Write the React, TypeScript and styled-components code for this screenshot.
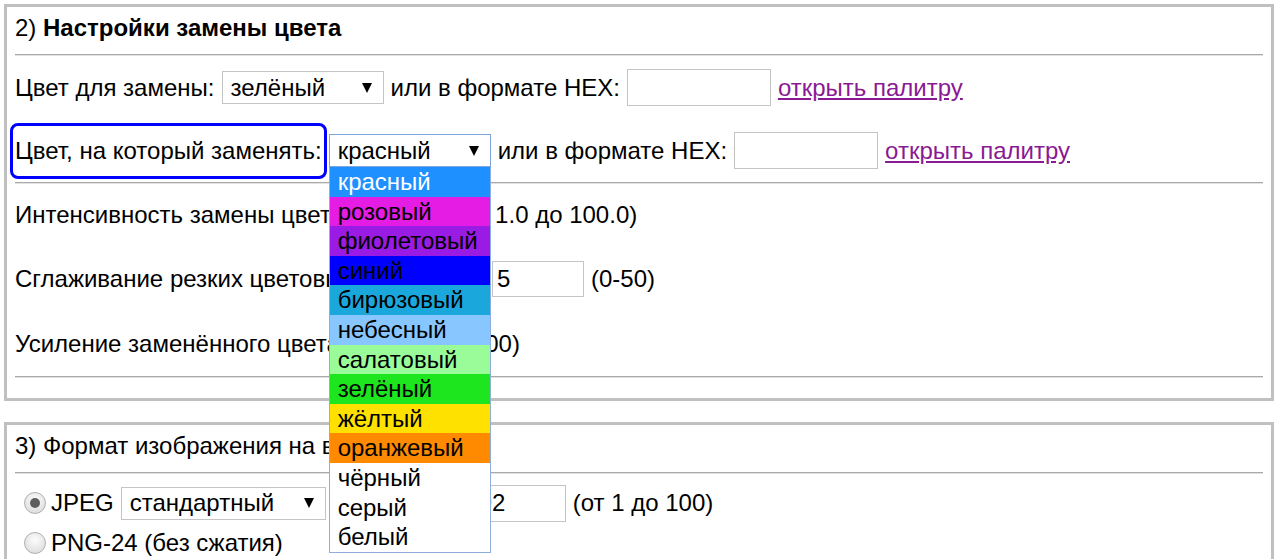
import styled, { createGlobalStyle } from "styled-components";

const GlobalStyle = createGlobalStyle`
    body{
        margin:0;
        background:#fff;
        color:#000;
        font-family:"Liberation Sans", Arial, sans-serif;
        font-size:24px;
    }
`;

const Page = styled.div`
    padding:4px 6px 0 4px;
`;

const Panel = styled.section`
    border:3px solid #c0c0c0;
    padding:0 8px 20px;
    & + &{
        margin-top:21px;
    }
`;

const Title = styled.div`
    padding:8px 0 13px;
    line-height:26px;
    b{ font-weight:bold; }
`;

const Divider = styled.hr`
    margin:0;
    height:0;
    border:0;
    border-top:1px solid #a9a9a9;
    border-bottom:1px solid #e2e2e2;
`;

const Row = styled.div<{ $h: number }>`
    display:flex;
    align-items:center;
    gap:7px;
    height:${p => p.$h}px;
    white-space:nowrap;
`;

const Highlight = styled.span`
    border:3px solid #0000ff;
    border-radius:8px;
    padding:11px 2px;
    margin:0 -5px 0 -5px;
`;

const SelectWrap = styled.div`
    position:relative;
`;

const Select = styled.div<{ $w: number; $open?: boolean }>`
    box-sizing:border-box;
    width:${p => p.$w}px;
    height:33px;
    display:flex;
    align-items:center;
    justify-content:space-between;
    padding:0 11px 0 8px;
    background:#fff;
    border:1px solid ${p => (p.$open ? "#7ea5dd" : "#c4c4c4")};

    &::after{
        content:"";
        border-left:5px solid transparent;
        border-right:5px solid transparent;
        border-top:10px solid #000;
    }
`;

const Options = styled.ul`
    position:absolute;
    top:100%;
    left:0;
    z-index:10;
    box-sizing:border-box;
    width:100%;
    margin:0;
    padding:0;
    list-style:none;
    background:#fff;
    border:1px solid #8eaede;
    border-top:0;
`;

const Option = styled.li<{ $bg: string; $fg?: string }>`
    height:29.6px;
    line-height:29.6px;
    padding:0 8px;
    background:${p => p.$bg};
    color:${p => p.$fg || "#000"};
`;

const TextInput = styled.div<{ $w: number; $h?: number }>`
    box-sizing:border-box;
    width:${p => p.$w}px;
    height:${p => p.$h || 37}px;
    display:flex;
    align-items:center;
    padding:0 4px;
    border:1px solid #c4c4c4;
    background:#fff;
`;

const PaletteLink = styled.a`
    color:#8a1a93;
    text-decoration:underline;
`;

const QualityLabel = styled.span`
    width:134px;
`;

const RadioList = styled.div`
    padding-top:9px;
`;

const RadioRow = styled.label`
    display:flex;
    align-items:center;
    height:40px;
    gap:7px;
    white-space:nowrap;
`;

const Radio = styled.span<{ $checked?: boolean }>`
    box-sizing:border-box;
    width:22px;
    height:22px;
    margin:0 -2px 0 9px;
    border-radius:50%;
    border:1px solid #b0b0b0;
    background:radial-gradient(circle at 50% 35%, #fdfdfd, #d6d6d6);
    display:flex;
    align-items:center;
    justify-content:center;

    &::after{
        content:"";
        width:10px;
        height:10px;
        border-radius:50%;
        background:#5f5f5f;
        display:${p => (p.$checked ? "block" : "none")};
    }
`;

const colors = [
    { name: "красный", bg: "#1e90ff", fg: "#fff" },
    { name: "розовый", bg: "#e41ce4" },
    { name: "фиолетовый", bg: "#9a1be3" },
    { name: "синий", bg: "#0000ff" },
    { name: "бирюзовый", bg: "#1aa8dc" },
    { name: "небесный", bg: "#87c6ff" },
    { name: "салатовый", bg: "#99fc99" },
    { name: "зелёный", bg: "#1ee61e" },
    { name: "жёлтый", bg: "#ffe100" },
    { name: "оранжевый", bg: "#ff8a00" },
    { name: "чёрный", bg: "#fff" },
    { name: "серый", bg: "#fff" },
    { name: "белый", bg: "#fff" },
];

export default function App() {
    return (
        <Page>
            <GlobalStyle />
            <Panel>
                <Title>2) <b>Настройки замены цвета</b></Title>
                <Divider />
                <Row $h={63}>
                    <span>Цвет для замены:</span>
                    <Select $w={162}>зелёный</Select>
                    <span>или в формате HEX:</span>
                    <TextInput $w={144} />
                    <PaletteLink href="#">открыть палитру</PaletteLink>
                </Row>
                <Row $h={63}>
                    <Highlight>Цвет, на который заменять:</Highlight>
                    <SelectWrap>
                        <Select $w={162} $open>красный</Select>
                        <Options>
                            {colors.map(c => (
                                <Option key={c.name} $bg={c.bg} $fg={c.fg}>{c.name}</Option>
                            ))}
                        </Options>
                    </SelectWrap>
                    <span>или в формате HEX:</span>
                    <TextInput $w={144} />
                    <PaletteLink href="#">открыть палитру</PaletteLink>
                </Row>
                <Divider />
                <Row $h={62}>
                    <span>Интенсивность замены цвета:</span>
                    <TextInput $w={92} $h={36}>50</TextInput>
                    <span>(от 1.0 до 100.0)</span>
                </Row>
                <Row $h={66}>
                    <span>Сглаживание резких цветовых переходов:</span>
                    <TextInput $w={92} $h={36}>5</TextInput>
                    <span>(0-50)</span>
                </Row>
                <Row $h={64}>
                    <span>Усиление заменённого цвета:</span>
                    <TextInput $w={82} $h={36}>0</TextInput>
                    <span>(0-100)</span>
                </Row>
                <Divider />
            </Panel>
            <Panel>
                <Title>3) Формат изображения на выходе</Title>
                <Divider />
                <RadioList>
                    <RadioRow>
                        <Radio $checked />
                        <span>JPEG</span>
                        <Select $w={205}>стандартный</Select>
                        <QualityLabel>качество:</QualityLabel>
                        <TextInput $w={92}>92</TextInput>
                        <span>(от 1 до 100)</span>
                    </RadioRow>
                    <RadioRow>
                        <Radio />
                        <span>PNG-24 (без сжатия)</span>
                    </RadioRow>
                </RadioList>
            </Panel>
        </Page>
    );
}
